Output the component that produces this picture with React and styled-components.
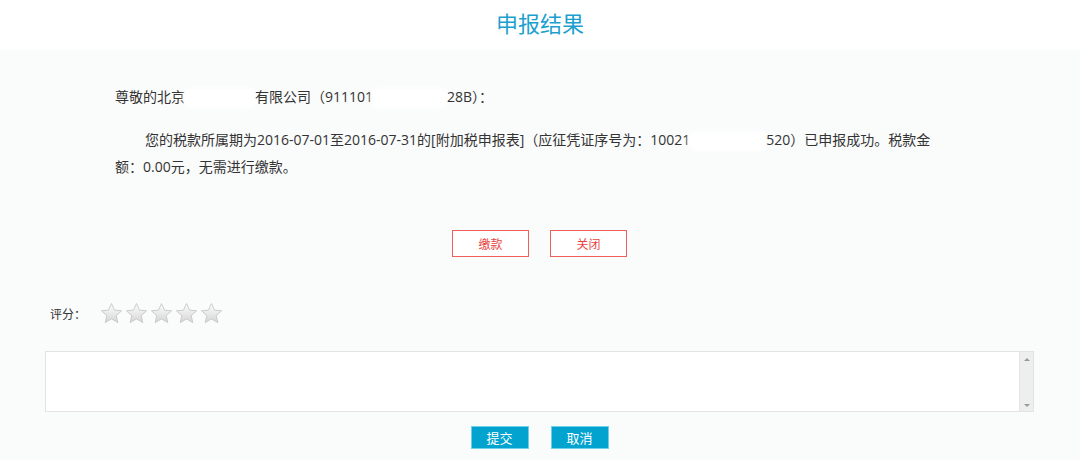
import React from 'react';
import styled, { createGlobalStyle } from 'styled-components';

const GlobalStyle = createGlobalStyle`
  html, body {
    margin: 0;
    padding: 0;
    background: #ffffff;
  }
  body {
    font-family: "Noto Sans CJK SC", "Open Sans", sans-serif;
    color: #333;
  }
`

const Page = styled.div`
  width: 1080px;
  height: 472px;
  background: #fff;
  overflow: hidden;
`

const Header = styled.div`
  height: 50px;
  display: flex;
  justify-content: center;
`

const Title = styled.h1`
  margin: 0;
  font-size: 22px;
  font-weight: normal;
  line-height: 44px;
  color: #1c9fcf;
`

const Main = styled.div`
  background: #fafbfb;
  height: 410px;
  box-sizing: border-box;
  padding: 0 46px 0 45px;
  display: flex;
  flex-direction: column;
`

const Letter = styled.div`
  padding: 0 0 0 70px;
  width: 833px;
  font-family: "Open Sans", "Noto Sans CJK SC", sans-serif;
  font-size: 14px;
  line-height: 27px;
  color: #333;
`

const Greeting = styled.p`
  margin: 33px 0 0;
`

const Body = styled.p`
  margin: 16px 0 0;
  text-indent: 30px;
`

const Blur = styled.span`
  display: inline-block;
  width: ${p => p.w}px;
  height: 16px;
  vertical-align: middle;
  background: #fff;
  border-radius: 6px;
  box-shadow: 0 0 4px 2px #fff;
  text-indent: 0;
`

const ActionRow = styled.div`
  display: flex;
  justify-content: center;
  gap: ${p => p.gap}px;
  margin-top: ${p => p.top}px;
`

const OutlineButton = styled.button`
  width: 77px;
  height: 27px;
  box-sizing: border-box;
  border: 1px solid #ef5f5b;
  background: #fff;
  color: #e9443f;
  font-family: inherit;
  font-size: 12px;
  padding: 0;
  cursor: pointer;
`

const SolidButton = styled.button`
  width: 58px;
  height: 23px;
  box-sizing: border-box;
  border: 1px solid #6fd0ea;
  background: #02a4cf;
  color: #fff;
  font-family: inherit;
  font-size: 13px;
  padding: 0;
  cursor: pointer;
`

const RatingRow = styled.div`
  display: flex;
  align-items: center;
  margin-top: 43px;
  padding-left: 5px;
  height: 26px;
`

const RatingLabel = styled.span`
  font-size: 12px;
  color: #333;
  width: 50px;
`

const Stars = styled.div`
  display: flex;
  gap: 2px;
`

const Comment = styled.div`
  margin-top: 25px;
  height: 61px;
  box-sizing: border-box;
  border: 1px solid #e3e3e3;
  background: #fff;
  display: flex;
`

const CommentInput = styled.textarea`
  flex: 1;
  border: none;
  outline: none;
  resize: none;
  background: transparent;
  font-family: inherit;
  font-size: 12px;
  padding: 4px 6px;
`

const ScrollTrack = styled.div`
  width: 13px;
  background: #eeeeee;
  border-left: 1px solid #e4e4e4;
  display: flex;
  flex-direction: column;
  justify-content: space-between;
  align-items: center;
  padding: 6px 0 4px;
`

const Arrow = styled.span`
  width: 0;
  height: 0;
  border-left: 3px solid transparent;
  border-right: 3px solid transparent;
  ${p => p.down
    ? 'border-top: 3px solid #9a9a9a;'
    : 'border-bottom: 3px solid #9a9a9a;'}
`

const Star = () => (
  <svg width="23" height="23" viewBox="0 0 24 24">
    <defs>
      <linearGradient id="starFill" x1="0" y1="0" x2="0" y2="1">
        <stop offset="0" stopColor="#ffffff" />
        <stop offset="1" stopColor="#d4d4d4" />
      </linearGradient>
    </defs>
    <path
      d="M12 1.6l3.1 6.9 7.4.7-5.6 5 1.7 7.3L12 17.7l-6.6 3.8 1.7-7.3-5.6-5 7.4-.7z"
      fill="url(#starFill)"
      stroke="#c9c9c9"
      strokeWidth="1"
      strokeLinejoin="round"
    />
  </svg>
)

export default function App() {
  return (
    <Page>
      <GlobalStyle />
      <Header>
        <Title>申报结果</Title>
      </Header>
      <Main>
        <Letter>
          <Greeting>
            尊敬的北京<Blur w={70} />有限公司（911101<Blur w={74} />28B）：
          </Greeting>
          <Body>
            您的税款所属期为2016-07-01至2016-07-31的[附加税申报表]（应征凭证序号为：10021<Blur w={76} />520）已申报成功。税款金额：0.00元，无需进行缴款。
          </Body>
        </Letter>

        <ActionRow gap={21} top={50}>
          <OutlineButton>缴款</OutlineButton>
          <OutlineButton>关闭</OutlineButton>
        </ActionRow>

        <RatingRow>
          <RatingLabel>评分：</RatingLabel>
          <Stars>
            {[0, 1, 2, 3, 4].map(i => <Star key={i} />)}
          </Stars>
        </RatingRow>

        <Comment>
          <CommentInput />
          <ScrollTrack>
            <Arrow />
            <Arrow down />
          </ScrollTrack>
        </Comment>

        <ActionRow gap={22} top={14}>
          <SolidButton>提交</SolidButton>
          <SolidButton>取消</SolidButton>
        </ActionRow>
      </Main>
    </Page>
  );
}
